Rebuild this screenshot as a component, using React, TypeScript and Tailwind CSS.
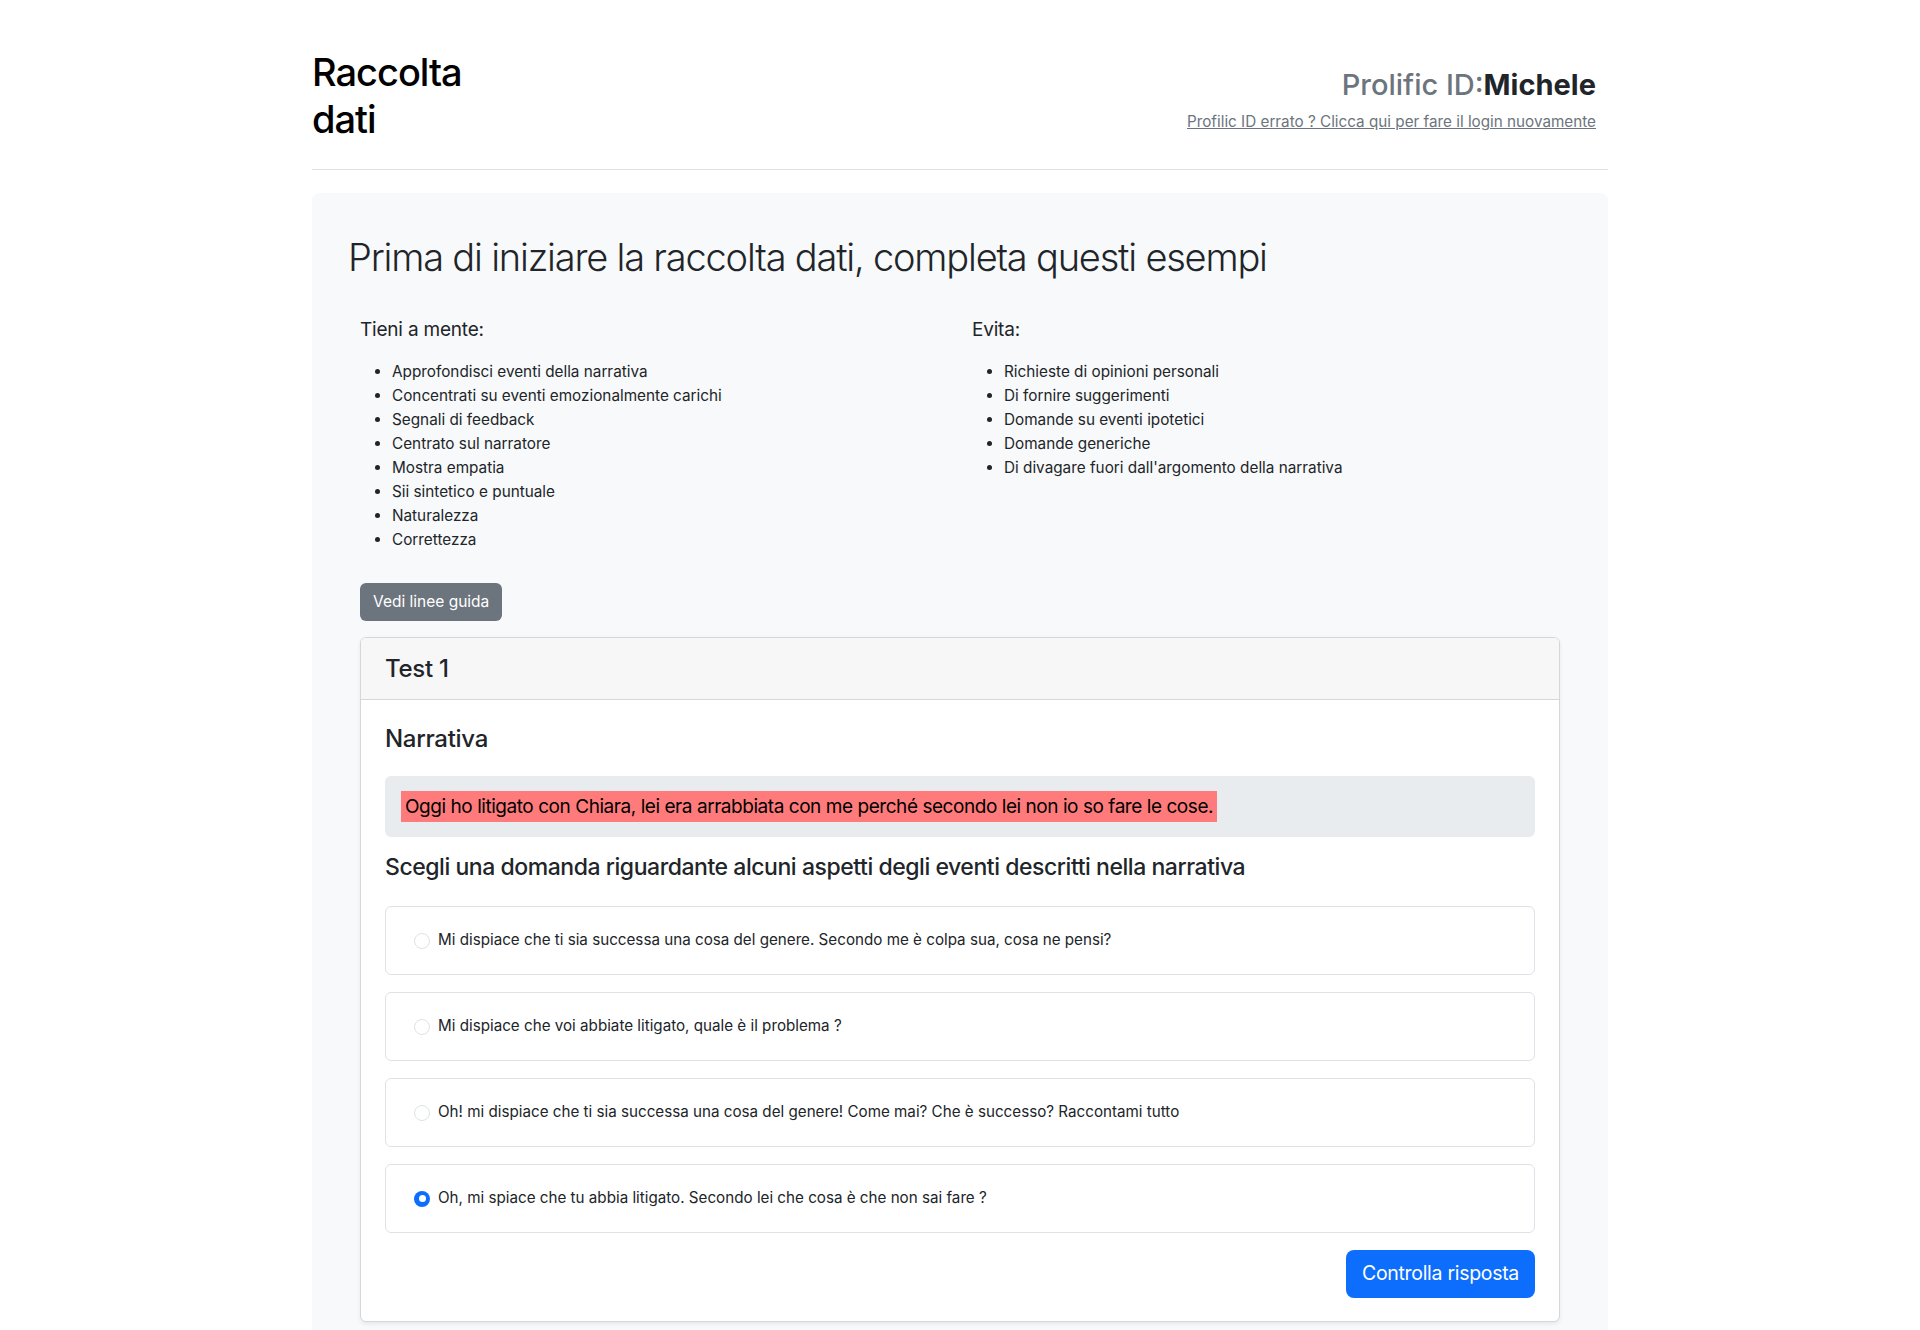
import { useState } from 'react'

const keepInMind = [
  'Approfondisci eventi della narrativa',
  'Concentrati su eventi emozionalmente carichi',
  'Segnali di feedback',
  'Centrato sul narratore',
  'Mostra empatia',
  'Sii sintetico e puntuale',
  'Naturalezza',
  'Correttezza',
]

const avoid = [
  'Richieste di opinioni personali',
  'Di fornire suggerimenti',
  'Domande su eventi ipotetici',
  'Domande generiche',
  "Di divagare fuori dall'argomento della narrativa",
]

const options = [
  'Mi dispiace che ti sia successa una cosa del genere. Secondo me è colpa sua, cosa ne pensi?',
  'Mi dispiace che voi abbiate litigato, quale è il problema ?',
  'Oh! mi dispiace che ti sia successa una cosa del genere! Come mai? Che è successo? Raccontami tutto',
  'Oh, mi spiace che tu abbia litigato. Secondo lei che cosa è che non sai fare ?',
]

export default function App() {
  const [selected, setSelected] = useState(3)

  return (
    <div className="min-h-screen bg-white font-['Inter','Liberation_Sans',sans-serif] text-[#212529]">
      <div className="mx-auto w-[1320px] px-[12px]">
        <header className="flex items-start justify-between border-b border-[#dee2e6] pb-[26px] pt-[49px]">
          <h1 className="w-[200px] text-[38px] font-medium leading-[47px] tracking-[-1px] text-black">Raccolta dati</h1>
          <div className="mt-[19px] flex flex-col items-end pr-[12px]">
            <h3 className="mb-[9px] text-[29px] font-medium leading-[33px]">
              <span className="text-[#6c757d]">Prolific ID:</span>
              <span className="font-bold">Michele</span>
            </h3>
            <a href="#" className="text-[15.25px] leading-[24px] text-[#6c757d] underline">
              Profilic ID errato ? Clicca qui per fare il login nuovamente
            </a>
          </div>
        </header>

        <div className="mt-[23px] rounded-lg bg-[#f8f9fa] px-[36px] pb-[48px] pt-[40px]">
          <h2 className="text-[38px] font-light leading-[48px] tracking-[-1.2px]">
            Prima di iniziare la raccolta dati, completa questi esempi
          </h2>

          <div className="mt-[35px] grid grid-cols-2 gap-[24px] px-[12px]">
            <div>
              <p className="text-[19px] leading-[28px] tracking-[-0.2px]">Tieni a mente:</p>
              <ul className="mt-[16px] list-disc pl-[32px] text-[15.3px] leading-[24px]">
                {keepInMind.map((item) => (
                  <li key={item}>{item}</li>
                ))}
              </ul>
            </div>
            <div>
              <p className="text-[19px] leading-[28px] tracking-[-0.2px]">Evita:</p>
              <ul className="mt-[16px] list-disc pl-[32px] text-[15.3px] leading-[24px]">
                {avoid.map((item) => (
                  <li key={item}>{item}</li>
                ))}
              </ul>
            </div>
          </div>

          <div className="px-[12px]">
            <button className="mt-[31px] h-[38px] rounded-[6px] bg-[#6c757d] px-[13px] text-[15.5px] text-white">
              Vedi linee guida
            </button>

            <div className="mt-[16px] overflow-hidden rounded-[6px] border border-[#d5d7d9] bg-white shadow-[0_2px_4px_rgba(0,0,0,0.075)]">
              <div className="border-b border-[#d5d7d9] bg-[#f7f7f7] px-[24px] py-[16px]">
                <h4 className="text-[24px] font-medium leading-[29px] tracking-[-0.3px]">Test 1</h4>
              </div>
              <div className="px-[24px] pb-[23px] pt-[24px]">
                <h4 className="text-[24px] font-medium leading-[29px] tracking-[-0.3px]">Narrativa</h4>
                <div className="mt-[23px] rounded-[6px] bg-[#e9ecef] px-[16px] pb-[15px] pt-[16px] text-[19px] leading-[30px] tracking-[-0.45px] text-black">
                  <span className="bg-[#ff7b7b] px-[4px] py-[4px]">
                    Oggi ho litigato con Chiara, lei era arrabbiata con me perché secondo lei non io so fare le cose.
                  </span>
                </div>

                <h4 className="mt-[16px] text-[23px] font-medium leading-[29px] tracking-[-0.45px]">
                  Scegli una domanda riguardante alcuni aspetti degli eventi descritti nella narrativa
                </h4>

                <div className="mt-[24px] flex flex-col gap-[17px]">
                  {options.map((opt, i) => (
                    <label
                      key={opt}
                      className="flex h-[69px] cursor-pointer items-center gap-[8px] rounded-[6px] border border-[#dee2e6] pl-[28px] text-[15.2px]"
                      onClick={() => setSelected(i)}
                    >
                      {selected === i ? (
                        <span className="flex h-[16px] w-[16px] items-center justify-center rounded-full bg-[#0d6efd]">
                          <span className="h-[7px] w-[7px] rounded-full bg-white" />
                        </span>
                      ) : (
                        <span className="h-[16px] w-[16px] rounded-full border border-[#dee2e6] bg-white" />
                      )}
                      <span>{opt}</span>
                    </label>
                  ))}
                </div>

                <div className="mt-[17px] flex justify-end">
                  <button className="h-[48px] rounded-[8px] bg-[#0d6efd] px-[16px] text-[19.5px] tracking-[-0.3px] text-white">
                    Controlla risposta
                  </button>
                </div>
              </div>
            </div>
          </div>
        </div>
      </div>
    </div>
  )
}
